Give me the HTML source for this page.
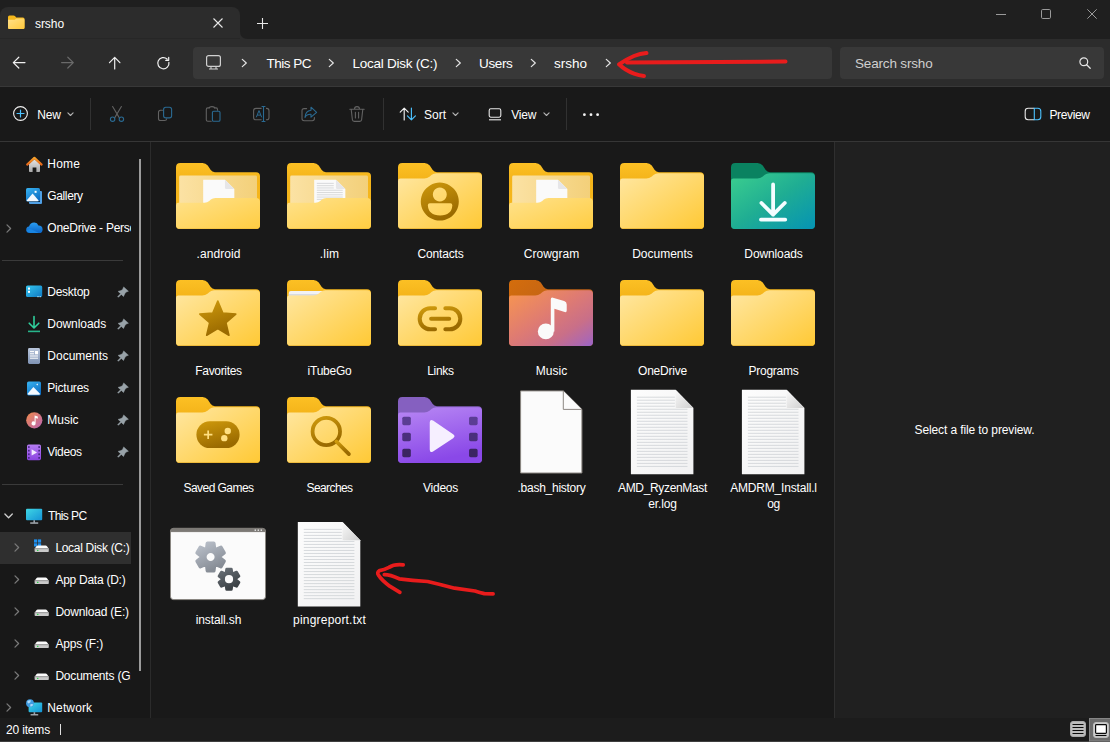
<!DOCTYPE html>
<html><head><meta charset="utf-8"><title>srsho - File Explorer</title>
<style>
html,body{margin:0;padding:0;background:#191919;overflow:hidden}
body{width:1110px;height:742px;position:relative;font-family:"Liberation Sans",sans-serif;color:#fff;font-size:12px}
.abs,#win *{position:absolute;box-sizing:border-box}
#win{position:absolute;left:0;top:0;width:1110px;height:742px;overflow:hidden}
#titlebar{left:0;top:0;width:1110px;height:39px;background:#1f1f1f}
#tab{left:0;top:7px;width:240px;height:32px;background:#2c2c2c;border-radius:8px 8px 0 0}
#addr{left:0;top:39px;width:1110px;height:47px;background:#2c2c2c}
#addrline{left:0;top:86px;width:1110px;height:1px;background:#383838}
#abox{left:193px;top:47px;width:639px;height:32px;background:#383838;border-radius:4px}
#sbox{left:840px;top:47px;width:264px;height:32px;background:#383838;border-radius:4px}
#cmd{left:0;top:87px;width:1110px;height:54px;background:#191919}
#cmdline{left:0;top:141px;width:1110px;height:1px;background:#363636}
#nav{left:0;top:142px;width:150px;height:576px;background:#181818}
#navdiv{left:150px;top:142px;width:1px;height:576px;background:#2b2b2b}
#content{left:151px;top:142px;width:683px;height:576px;background:#191919}
#prevdiv{left:834px;top:142px;width:1px;height:576px;background:#2f2f2f}
#preview{left:835px;top:142px;width:275px;height:576px;background:#202020}
#status{left:0;top:718px;width:1110px;height:24px;background:#1c1c1c}
#botline{left:0;top:741px;width:1110px;height:1px;background:#3f3f3f}
.t{white-space:nowrap;line-height:16px;height:16px}
.t13{font-size:13px;line-height:18px;height:18px}
.lbl{width:111px;text-align:center;line-height:16px;white-space:nowrap}
svg{overflow:visible}
</style></head><body><div id="win">
<div id="titlebar"></div>
<div id="tab"></div><div style="left:0;top:38px;width:240px;height:1px;background:#272727"></div>
<div id="addr"></div><div id="addrline"></div>
<div id="abox"></div><div id="sbox"></div>
<div id="cmd"></div><div id="cmdline"></div>
<div id="nav"></div><div id="navdiv"></div>
<div id="content"></div><div id="prevdiv"></div><div id="preview"></div>
<div id="status"></div><div id="botline"></div>

<div class="t" style="left:35px;top:16px;letter-spacing:-0.07px;">srsho</div>
<div class="t" style="left:266.5px;top:55px;font-size:13.5px;line-height:18px;height:18px;letter-spacing:-0.5px;">This PC</div>
<div class="t" style="left:352.5px;top:55px;font-size:13.5px;line-height:18px;height:18px;letter-spacing:-0.25px;">Local Disk (C:)</div>
<div class="t" style="left:479px;top:55px;font-size:13.5px;line-height:18px;height:18px;letter-spacing:-0.35px;">Users</div>
<div class="t" style="left:554px;top:55px;font-size:13.5px;line-height:18px;height:18px;letter-spacing:-0.0px;">srsho</div>
<div class="t" style="left:855px;top:55px;font-size:13.5px;line-height:18px;height:18px;letter-spacing:-0.17px;color:#cfcfcf">Search srsho</div>
<div class="t" style="left:37.2px;top:107px;letter-spacing:-0.11px;">New</div>
<div class="t" style="left:424px;top:107px;letter-spacing:-0.0px;">Sort</div>
<div class="t" style="left:511.3px;top:107px;letter-spacing:-0.22px;">View</div>
<div class="t" style="left:1049.4px;top:107px;letter-spacing:-0.34px;">Preview</div>
<div class="t" style="left:6px;top:722px;letter-spacing:-0.17px;">20 items</div>
<div class="t" style="left:874.5px;top:422px;width:200px;text-align:center;letter-spacing:-0.11px;">Select a file to preview.</div>

<div id="navclip" style="left:0;top:142px;width:131px;height:576px;overflow:hidden">
<div style="left:0;top:390px;width:131px;height:32px;background:#2f2f2f"></div>
<div class="t" style="left:47.3px;top:14px;letter-spacing:0.17px;">Home</div>
<div class="t" style="left:47.3px;top:46px;letter-spacing:-0.37px;">Gallery</div>
<div class="t" style="left:47.3px;top:78px;letter-spacing:-0.25px;">OneDrive - Personal</div>
<div class="t" style="left:47.3px;top:142px;letter-spacing:-0.26px;">Desktop</div>
<div class="t" style="left:47.3px;top:174px;letter-spacing:-0.06px;">Downloads</div>
<div class="t" style="left:47.3px;top:206px;letter-spacing:0.01px;">Documents</div>
<div class="t" style="left:47.3px;top:238px;letter-spacing:-0.22px;">Pictures</div>
<div class="t" style="left:47.3px;top:270px;letter-spacing:-0.01px;">Music</div>
<div class="t" style="left:47.3px;top:302px;letter-spacing:-0.33px;">Videos</div>
<div class="t" style="left:48px;top:366px;letter-spacing:-0.6px;">This PC</div>
<div class="t" style="left:55.4px;top:398px;letter-spacing:-0.31px;">Local Disk (C:)</div>
<div class="t" style="left:55.4px;top:430px;letter-spacing:-0.26px;">App Data (D:)</div>
<div class="t" style="left:55.4px;top:462px;letter-spacing:-0.2px;">Download (E:)</div>
<div class="t" style="left:55.4px;top:494px;letter-spacing:-0.2px;">Apps (F:)</div>
<div class="t" style="left:55.4px;top:526px;letter-spacing:-0.2px;">Documents (G:)</div>
<div class="t" style="left:47.3px;top:558px;letter-spacing:0.13px;">Network</div>
</div>
<div style="left:2px;top:260px;width:121px;height:1px;background:#3a3a3a"></div>
<div style="left:2px;top:484px;width:121px;height:1px;background:#3a3a3a"></div>
<div style="left:139px;top:159px;width:2px;height:512px;background:#9b9b9b"></div>
<div style="left:60px;top:724px;width:1px;height:11px;background:#e0e0e0"></div>

<div class="t" style="left:118.5px;top:246px;width:200px;text-align:center;letter-spacing:0.05px;">.android</div>
<div class="t" style="left:229.5px;top:246px;width:200px;text-align:center;letter-spacing:0.21px;">.lim</div>
<div class="t" style="left:340.5px;top:246px;width:200px;text-align:center;letter-spacing:-0.14px;">Contacts</div>
<div class="t" style="left:451.5px;top:246px;width:200px;text-align:center;letter-spacing:-0.01px;">Crowgram</div>
<div class="t" style="left:562.5px;top:246px;width:200px;text-align:center;letter-spacing:-0.01px;">Documents</div>
<div class="t" style="left:673.5px;top:246px;width:200px;text-align:center;letter-spacing:-0.12px;">Downloads</div>
<div class="t" style="left:118.5px;top:363px;width:200px;text-align:center;letter-spacing:-0.32px;">Favorites</div>
<div class="t" style="left:229.5px;top:363px;width:200px;text-align:center;letter-spacing:-0.26px;">iTubeGo</div>
<div class="t" style="left:340.5px;top:363px;width:200px;text-align:center;letter-spacing:-0.28px;">Links</div>
<div class="t" style="left:451.5px;top:363px;width:200px;text-align:center;letter-spacing:0.07px;">Music</div>
<div class="t" style="left:562.5px;top:363px;width:200px;text-align:center;letter-spacing:-0.22px;">OneDrive</div>
<div class="t" style="left:673.5px;top:363px;width:200px;text-align:center;letter-spacing:-0.26px;">Programs</div>
<div class="t" style="left:118.5px;top:480px;width:200px;text-align:center;letter-spacing:-0.54px;">Saved Games</div>
<div class="t" style="left:229.5px;top:480px;width:200px;text-align:center;letter-spacing:-0.6px;">Searches</div>
<div class="t" style="left:340.5px;top:480px;width:200px;text-align:center;letter-spacing:-0.25px;">Videos</div>
<div class="t" style="left:451.5px;top:480px;width:200px;text-align:center;letter-spacing:-0.26px;">.bash_history</div>
<div class="t" style="left:562.5px;top:480px;width:200px;text-align:center;letter-spacing:-0.34px;">AMD_RyzenMast</div>
<div class="t" style="left:673.5px;top:480px;width:200px;text-align:center;letter-spacing:-0.18px;">AMDRM_Install.l</div>
<div class="t" style="left:562.5px;top:496px;width:200px;text-align:center;letter-spacing:-0.11px;">er.log</div>
<div class="t" style="left:673.5px;top:496px;width:200px;text-align:center;letter-spacing:-0.38px;">og</div>
<div class="t" style="left:118.5px;top:612px;width:200px;text-align:center;letter-spacing:-0.11px;">install.sh</div>
<div class="t" style="left:229.5px;top:612px;width:200px;text-align:center;letter-spacing:0.2px;">pingreport.txt</div>

<!-- tab concave corner -->
<svg style="left:240px;top:31px" width="8" height="8" viewBox="0 0 8 8"><path d="M0 0 Q0 8 8 8 H0Z" fill="#2c2c2c"/></svg>
<!-- tab folder icon -->
<svg style="left:8px;top:15px" width="17" height="15" viewBox="0 0 17 15"><defs><linearGradient id="tfg" x1="0" y1="0" x2="1" y2="1"><stop offset="0" stop-color="#ffe08a"/><stop offset="1" stop-color="#ffc93c"/></linearGradient></defs>
<path d="M0 2 Q0 0.5 1.5 0.5 H5.5 Q6.5 0.5 7.2 1.3 L8.2 2.5 H15 Q16.5 2.5 16.5 4 V12.5 Q16.5 14 15 14 H1.5 Q0 14 0 12.5Z" fill="#f5b81c"/>
<path d="M0 4.8 H6 Q6.8 4.8 7.4 4.2 L8 3.6 H15 Q16.5 3.6 16.5 5 V12.5 Q16.5 14 15 14 H1.5 Q0 14 0 12.5Z" fill="url(#tfg)"/></svg>
<!-- tab close, plus -->
<svg style="left:213px;top:18px" width="10" height="10" viewBox="0 0 10 10"><path d="M0.5 0.5 L9.5 9.5 M9.5 0.5 L0.5 9.5" stroke="#e8e8e8" stroke-width="1.1" fill="none"/></svg>
<svg style="left:257px;top:18px" width="11" height="11" viewBox="0 0 11 11"><path d="M5.5 0 V11 M0 5.5 H11" stroke="#e8e8e8" stroke-width="1.1" fill="none"/></svg>
<!-- window controls -->
<svg style="left:996px;top:14px" width="10" height="1" viewBox="0 0 10 1"><path d="M0 0.5 H10" stroke="#9a9a9a" stroke-width="1"/></svg>
<svg style="left:1041px;top:9px" width="10" height="10" viewBox="0 0 10 10"><rect x="0.5" y="0.5" width="9" height="9" rx="1.2" stroke="#9a9a9a" stroke-width="1" fill="none"/></svg>
<svg style="left:1087px;top:9px" width="10" height="10" viewBox="0 0 10 10"><path d="M0.3 0.3 L9.7 9.7 M9.7 0.3 L0.3 9.7" stroke="#9a9a9a" stroke-width="1" fill="none"/></svg>
<!-- nav arrows -->
<svg style="left:12px;top:56px" width="14" height="13" viewBox="0 0 14 13"><path d="M13 6.6 H1.4 M6.8 1.2 L1.3 6.6 L6.8 12" stroke="#f0f0f0" stroke-width="1.2" fill="none" stroke-linecap="round" stroke-linejoin="round"/></svg>
<svg style="left:60px;top:56px" width="14" height="13" viewBox="0 0 14 13"><path d="M1.6 6.6 H13.2 M7.8 1.2 L13.3 6.6 L7.8 12" stroke="#6a6a6a" stroke-width="1.2" fill="none" stroke-linecap="round" stroke-linejoin="round"/></svg>
<svg style="left:108px;top:56px" width="14" height="14" viewBox="0 0 14 14"><path d="M6.7 12.9 V1.4 M1.5 6.7 L6.7 1.3 L11.9 6.7" stroke="#f0f0f0" stroke-width="1.2" fill="none" stroke-linecap="round" stroke-linejoin="round"/></svg>
<svg style="left:156px;top:56px" width="14" height="14" viewBox="0 0 14 14"><path d="M12.7 6.2 A5.6 5.6 0 1 1 10.9 2.9 M12.5 1.2 V4.2 H9.5" stroke="#f0f0f0" stroke-width="1.2" fill="none" stroke-linecap="round" stroke-linejoin="round" transform="translate(0.2,0.1)"/></svg>
<!-- monitor -->
<svg style="left:206px;top:55px" width="15" height="15" viewBox="0 0 15 15"><rect x="0.6" y="0.6" width="13.8" height="10.8" rx="2" stroke="#d0d0d0" stroke-width="1.2" fill="none"/><path d="M5 11.5 V13.6 M10 11.5 V13.6 M3 14 H12" stroke="#d0d0d0" stroke-width="1.1" fill="none"/></svg>
<!-- chevrons -->
<svg style="left:241px;top:58px" width="6" height="10" viewBox="0 0 6 10"><path d="M1.3 1.4 L5.3 5 L1.3 8.6" stroke="#e6e6e6" stroke-width="1.2" fill="none" stroke-linecap="round" stroke-linejoin="round"/></svg>
<svg style="left:328px;top:58px" width="6" height="10" viewBox="0 0 6 10"><path d="M1.3 1.4 L5.3 5 L1.3 8.6" stroke="#e6e6e6" stroke-width="1.2" fill="none" stroke-linecap="round" stroke-linejoin="round"/></svg>
<svg style="left:455px;top:58px" width="6" height="10" viewBox="0 0 6 10"><path d="M1.3 1.4 L5.3 5 L1.3 8.6" stroke="#e6e6e6" stroke-width="1.2" fill="none" stroke-linecap="round" stroke-linejoin="round"/></svg>
<svg style="left:530px;top:58px" width="6" height="10" viewBox="0 0 6 10"><path d="M1.3 1.4 L5.3 5 L1.3 8.6" stroke="#e6e6e6" stroke-width="1.2" fill="none" stroke-linecap="round" stroke-linejoin="round"/></svg>
<svg style="left:605px;top:58px" width="6" height="10" viewBox="0 0 6 10"><path d="M1.3 1.4 L5.3 5 L1.3 8.6" stroke="#e6e6e6" stroke-width="1.2" fill="none" stroke-linecap="round" stroke-linejoin="round"/></svg>
<!-- search icon -->
<svg style="left:1079px;top:57px" width="12" height="12" viewBox="0 0 12 12"><circle cx="4.8" cy="4.8" r="3.9" stroke="#e6e6e6" stroke-width="1.2" fill="none"/><path d="M7.7 7.7 L11.2 11.2" stroke="#e6e6e6" stroke-width="1.3" stroke-linecap="round"/></svg>
<!-- COMMAND BAR -->
<svg style="left:13px;top:106px" width="15" height="15" viewBox="0 0 15 15"><circle cx="7.5" cy="7.5" r="6.9" stroke="#f0f0f0" stroke-width="1.1" fill="none"/><path d="M7.5 4 V11 M4 7.5 H11" stroke="#4cc2ff" stroke-width="1.2" stroke-linecap="round"/></svg>
<svg style="left:67px;top:112px" width="7" height="5" viewBox="0 0 7 5"><path d="M0.9 0.9 L3.5 3.5 L6.1 0.9" stroke="#b4b4b4" stroke-width="1.1" fill="none" stroke-linecap="round" stroke-linejoin="round"/></svg>
<div style="left:90px;top:98px;width:1px;height:32px;background:#313131"></div>
<!-- cut -->
<svg style="left:109px;top:106px" width="16" height="16" viewBox="0 0 16 16"><path d="M3.6 0.5 L10.2 11.6 M12.4 0.5 L5.8 11.6" stroke="#626262" stroke-width="1.1" fill="none" stroke-linecap="round"/><circle cx="3.6" cy="13.2" r="2.2" stroke="#2a6a92" stroke-width="1.1" fill="none"/><circle cx="12.4" cy="13.2" r="2.2" stroke="#2a6a92" stroke-width="1.1" fill="none"/></svg>
<!-- copy -->
<svg style="left:157px;top:106px" width="16" height="16" viewBox="0 0 16 16"><path d="M5.5 4.2 H3.6 Q1.5 4.2 1.5 6.3 V12.4 Q1.5 14.5 3.6 14.5 H7.6 Q9.6 14.5 9.7 12.8" stroke="#626262" stroke-width="1.1" fill="none" stroke-linecap="round"/><rect x="6.6" y="1.3" width="8" height="10.6" rx="2.2" stroke="#2a6a92" stroke-width="1.1" fill="none"/></svg>
<!-- paste -->
<svg style="left:205px;top:106px" width="16" height="16" viewBox="0 0 16 16"><path d="M6.2 15.2 H2.8 Q1.3 15.2 1.3 13.7 V3.4 Q1.3 1.9 2.8 1.9 H4.2 M9.6 1.9 H11 Q12.5 1.9 12.5 3.4 V4.3" stroke="#626262" stroke-width="1.1" fill="none" stroke-linecap="round"/><path d="M4.2 2.2 Q4.2 0.6 6.9 0.6 Q9.6 0.6 9.6 2.2" stroke="#626262" stroke-width="1.1" fill="none"/><rect x="7.4" y="5.2" width="7.6" height="10" rx="1.3" stroke="#2a6a92" stroke-width="1.1" fill="none"/></svg>
<!-- rename -->
<svg style="left:253px;top:105px" width="17" height="18" viewBox="0 0 17 18"><path d="M8.6 3.4 H3 Q0.6 3.4 0.6 5.8 V12.4 Q0.6 14.8 3 14.8 H8.6 M13 3.4 H13.6 Q16 3.4 16 5.8 V12.4 Q16 14.8 13.6 14.8 H13" stroke="#626262" stroke-width="1.1" fill="none"/><path d="M10.5 1.5 V16.5 M8.6 1.5 H12.4 M8.6 16.5 H12.4" stroke="#2a6a92" stroke-width="1.1" fill="none"/><path d="M3.3 12.3 L6 5.6 L8.7 12.3 M4.2 10.1 H7.8" stroke="#2a6a92" stroke-width="1" fill="none" stroke-linejoin="round"/></svg>
<!-- share -->
<svg style="left:301px;top:106px" width="17" height="16" viewBox="0 0 17 16"><path d="M5.6 2.6 H3.2 Q1 2.6 1 4.8 V12.6 Q1 14.8 3.2 14.8 H11.2 Q13.4 14.8 13.4 12.6 V11.6" stroke="#626262" stroke-width="1.1" fill="none" stroke-linecap="round"/><path d="M10 1.2 L15.6 6.3 L10 11.2 V8.3 Q5.8 8 4 11.4 Q4.3 5 10 4.2 Z" stroke="#2a6a92" stroke-width="1.1" fill="none" stroke-linejoin="round"/></svg>
<!-- delete -->
<svg style="left:349px;top:106px" width="16" height="16" viewBox="0 0 16 16"><path d="M0.8 3.2 H15.2 M5.5 3 Q5.5 0.6 8 0.6 Q10.5 0.6 10.5 3 M2.2 3.4 L3.4 13.8 Q3.6 15.4 5.2 15.4 H10.8 Q12.4 15.4 12.6 13.8 L13.8 3.4 M6.4 6.3 V12 M9.6 6.3 V12" stroke="#626262" stroke-width="1.1" fill="none" stroke-linecap="round"/></svg>
<div style="left:383px;top:98px;width:1px;height:32px;background:#313131"></div>
<!-- sort -->
<svg style="left:399px;top:107px" width="18" height="14" viewBox="0 0 18 14"><path d="M5.2 13 V1.2 M1.2 5.2 L5.2 1.1 L9.2 5.2" stroke="#f0f0f0" stroke-width="1.15" fill="none" stroke-linecap="round" stroke-linejoin="round"/><path d="M12.4 1 V12.8 M8.4 8.8 L12.4 12.9 L16.4 8.8" stroke="#4cc2ff" stroke-width="1.15" fill="none" stroke-linecap="round" stroke-linejoin="round"/></svg>
<svg style="left:452px;top:112px" width="7" height="5" viewBox="0 0 7 5"><path d="M0.9 0.9 L3.5 3.5 L6.1 0.9" stroke="#b4b4b4" stroke-width="1.1" fill="none" stroke-linecap="round" stroke-linejoin="round"/></svg>
<!-- view -->
<svg style="left:488px;top:108px" width="14" height="13" viewBox="0 0 14 13"><rect x="1.2" y="0.8" width="11.6" height="8.4" rx="1.6" stroke="#e8e8e8" stroke-width="1.1" fill="none"/><path d="M1 11.8 H13" stroke="#e8e8e8" stroke-width="1.1"/></svg>
<svg style="left:543px;top:112px" width="7" height="5" viewBox="0 0 7 5"><path d="M0.9 0.9 L3.5 3.5 L6.1 0.9" stroke="#b4b4b4" stroke-width="1.1" fill="none" stroke-linecap="round" stroke-linejoin="round"/></svg>
<div style="left:566px;top:98px;width:1px;height:32px;background:#313131"></div>
<svg style="left:582px;top:112px" width="18" height="5" viewBox="0 0 18 5"><circle cx="2.4" cy="2.7" r="1.4" fill="#f4f4f4"/><circle cx="9" cy="2.7" r="1.4" fill="#f4f4f4"/><circle cx="15.6" cy="2.7" r="1.4" fill="#f4f4f4"/></svg>
<!-- preview -->
<svg style="left:1024px;top:107px" width="18" height="14" viewBox="0 0 18 14"><path d="M10.3 1.2 H4.2 Q1.2 1.2 1.2 4.2 V9.8 Q1.2 12.8 4.2 12.8 H10.3" stroke="#e8e8e8" stroke-width="1.1" fill="none"/><path d="M10.3 1.2 H13.8 Q16.8 1.2 16.8 4.2 V9.8 Q16.8 12.8 13.8 12.8 H10.3 Z" stroke="#4cc2ff" stroke-width="1.1" fill="none"/></svg>
<!-- status bar view buttons -->
<svg style="left:1068px;top:718px" width="42" height="24" viewBox="0 0 42 24"><rect x="21.5" y="0.5" width="21" height="22.5" fill="#6c6c6c" stroke="#868686" stroke-width="1"/><rect x="2.5" y="3.5" width="15" height="15" rx="2.5" fill="#bcbcbc" stroke="#a9a9a9" stroke-width="1"/><path d="M4.5 6.5 H15.5 M4.5 9.5 H15.5 M4.5 12.5 H15.5 M4.5 15.5 H15.5" stroke="#0a0a0a" stroke-width="1.2"/><rect x="25.5" y="4.5" width="15" height="15" rx="2.5" fill="#cdcdcd" stroke="#bdbdbd" stroke-width="1"/><rect x="27.6" y="6.6" width="10.8" height="8.8" rx="0.8" fill="#fff" stroke="#0a0a0a" stroke-width="1.2"/><path d="M27.5 17.5 H38.5" stroke="#0a0a0a" stroke-width="1.1"/></svg>
<svg width="0" height="0" style="left:0;top:0"><defs><linearGradient id="gHomeR" x1="0" y1="0" x2="0" y2="1"><stop offset="0" stop-color="#f7a02a"/><stop offset="1" stop-color="#e8681a"/></linearGradient><linearGradient id="gHomeB" x1="0" y1="0" x2="0" y2="1"><stop offset="0" stop-color="#e6e6e6"/><stop offset="1" stop-color="#a8a8a8"/></linearGradient><linearGradient id="gBlue" x1="0" y1="0" x2="0.6" y2="1"><stop offset="0" stop-color="#38b4f2"/><stop offset="1" stop-color="#0f6fc4"/></linearGradient><linearGradient id="gDesk" x1="0" y1="0" x2="1" y2="1"><stop offset="0" stop-color="#35c6ef"/><stop offset="1" stop-color="#0e78c2"/></linearGradient><linearGradient id="gPC" x1="0" y1="0" x2="1" y2="1"><stop offset="0" stop-color="#3fd6e4"/><stop offset="1" stop-color="#1593d6"/></linearGradient><linearGradient id="gDoc" x1="0" y1="0" x2="0" y2="1"><stop offset="0" stop-color="#b9c6dc"/><stop offset="1" stop-color="#7f93b4"/></linearGradient><linearGradient id="gMus" x1="0" y1="0" x2="1" y2="1"><stop offset="0" stop-color="#f08a4a"/><stop offset="1" stop-color="#b964b4"/></linearGradient><linearGradient id="gVid" x1="0" y1="0" x2="0" y2="1"><stop offset="0" stop-color="#b57cf2"/><stop offset="1" stop-color="#8a43e0"/></linearGradient><linearGradient id="gDrv" x1="0" y1="0" x2="0" y2="1"><stop offset="0" stop-color="#f2f2f2"/><stop offset="1" stop-color="#b8b8b8"/></linearGradient><linearGradient id="gCloud" x1="0" y1="0" x2="0" y2="1"><stop offset="0" stop-color="#2a9cf0"/><stop offset="1" stop-color="#0a64c8"/></linearGradient></defs></svg>
<svg style="left:26px;top:156px" width="17" height="17" viewBox="0 0 17 17"><path d="M3 8 V15.2 Q3 16 3.8 16 H6.6 V11.4 H10.4 V16 H13.2 Q14 16 14 15.2 V8 L8.5 3.2 Z" fill="url(#gHomeB)"/><path d="M1.2 8.6 L8.4 1.9 L15.6 8.6" stroke="url(#gHomeR)" stroke-width="2.2" fill="none" stroke-linecap="round" stroke-linejoin="round"/></svg>
<svg style="left:26px;top:188px" width="17" height="17" viewBox="0 0 17 17"><path d="M3 14 H16 V15 Q16 16 15 16 H4 Q3 16 3 15Z M14 3 H15 Q16 3 16 4 V15 H14Z" fill="#4f9fe4"/><rect x="0" y="0" width="14" height="13.6" rx="1.6" fill="url(#gBlue)"/><path d="M0.6 12.4 L6.6 5.4 L12.6 12.4 Q12.4 13.2 11.6 13.2 H1.6 Q0.8 13.2 0.6 12.4Z" fill="#f4f9ff"/><rect x="8.6" y="2.8" width="2" height="2" fill="#fff"/></svg>
<svg style="left:26px;top:222px" width="17" height="12" viewBox="0 0 17 12"><path d="M4 11 Q0.2 11 0.2 7.8 Q0.2 5 3 4.6 Q4.4 0.4 8.4 0.6 Q11.4 0.8 12.4 3.6 Q16.6 3.6 16.6 7.4 Q16.6 11 13 11 Z" fill="url(#gCloud)"/><path d="M0.4 8.6 Q2.5 6.4 5.8 7.4 L13 11 H4 Q1 11 0.4 8.6Z" fill="#1a8ae6" opacity=".85"/></svg>
<svg style="left:6px;top:224px" width="6" height="9" viewBox="0 0 6 9"><path d="M1 0.9 L4.6 4.5 L1 8.1" stroke="#7a7a7a" stroke-width="1.25" fill="none" stroke-linecap="round" stroke-linejoin="round"/></svg>
<svg style="left:26px;top:285px" width="17" height="13" viewBox="0 0 17 13"><rect x="0" y="0.5" width="16.2" height="11.6" rx="1.6" fill="url(#gDesk)"/><rect x="2" y="2.6" width="2" height="2" fill="#fff"/><rect x="2" y="5.8" width="2" height="2" fill="#fff"/><rect x="11.4" y="11.2" width="1.2" height="1" fill="#dff"/><rect x="13.6" y="11.2" width="1.2" height="1" fill="#dff"/></svg>
<svg style="left:28px;top:316px" width="12" height="17" viewBox="0 0 12 17"><path d="M6 0.6 V11.6 M1.2 7.2 L6 12 L10.8 7.2" stroke="#2fcf9c" stroke-width="1.6" fill="none" stroke-linecap="round" stroke-linejoin="round"/><path d="M0 15.4 H12" stroke="#27b48a" stroke-width="1.6"/></svg>
<svg style="left:28px;top:348px" width="12" height="16" viewBox="0 0 12 16"><rect x="0" y="0" width="12" height="16" rx="1.4" fill="url(#gDoc)"/><path d="M2 3.6 H6 M2 5.8 H6 M2 8 H10 M2 10.2 H10" stroke="#fff" stroke-width="1"/><rect x="7" y="3" width="3" height="3.3" fill="#fff"/></svg>
<svg style="left:27px;top:381px" width="14" height="15" viewBox="0 0 14 15"><rect x="0" y="0.6" width="14" height="13.8" rx="1.6" fill="url(#gBlue)"/><path d="M0.6 12.8 L6.4 6 L13 12.8 Q13 13.8 12 13.8 H1.6 Q0.6 13.8 0.6 12.8Z" fill="#f4f9ff"/><path d="M10.2 2.6 L11 3.6 L10.2 4.6 L9.4 3.6Z" fill="#fff"/></svg>
<svg style="left:26px;top:412px" width="17" height="17" viewBox="0 0 17 17"><circle cx="8.3" cy="8.3" r="8.1" fill="url(#gMus)"/><path d="M8.6 3.6 L11.8 4.6 V6.8 L9.6 6.1 V11.4 A2 2 0 1 1 8.6 9.7 Z" fill="#fff"/></svg>
<svg style="left:27px;top:444px" width="14" height="17" viewBox="0 0 14 17"><rect x="0" y="0.6" width="14" height="15.6" rx="1.6" fill="url(#gVid)"/><path d="M4.6 5.2 L10 8.4 L4.6 11.6Z" fill="#f3ebff"/><g fill="#4a2a86"><rect x="1" y="2.2" width="1.7" height="1.7"/><rect x="1" y="5.8" width="1.7" height="1.7"/><rect x="1" y="9.4" width="1.7" height="1.7"/><rect x="1" y="13" width="1.7" height="1.7"/><rect x="11.3" y="2.2" width="1.7" height="1.7"/><rect x="11.3" y="5.8" width="1.7" height="1.7"/><rect x="11.3" y="9.4" width="1.7" height="1.7"/><rect x="11.3" y="13" width="1.7" height="1.7"/></g></svg>
<svg style="left:117px;top:286px" width="12" height="12" viewBox="0 0 12 12"><path d="M6.7,0.9 L11.4,5.2 L9.1,6.1 L7.8,7.7 L6.5,10.5 L4.3,8.4 L1.4,11.3 L0.7,10.6 L3.6,7.7 L1.1,5.4 L4,4.6 L5.6,3.4 Z" fill="#98a2a8" stroke="#98a2a8" stroke-width="0.5" stroke-linejoin="round"/></svg>
<svg style="left:117px;top:318px" width="12" height="12" viewBox="0 0 12 12"><path d="M6.7,0.9 L11.4,5.2 L9.1,6.1 L7.8,7.7 L6.5,10.5 L4.3,8.4 L1.4,11.3 L0.7,10.6 L3.6,7.7 L1.1,5.4 L4,4.6 L5.6,3.4 Z" fill="#98a2a8" stroke="#98a2a8" stroke-width="0.5" stroke-linejoin="round"/></svg>
<svg style="left:117px;top:350px" width="12" height="12" viewBox="0 0 12 12"><path d="M6.7,0.9 L11.4,5.2 L9.1,6.1 L7.8,7.7 L6.5,10.5 L4.3,8.4 L1.4,11.3 L0.7,10.6 L3.6,7.7 L1.1,5.4 L4,4.6 L5.6,3.4 Z" fill="#98a2a8" stroke="#98a2a8" stroke-width="0.5" stroke-linejoin="round"/></svg>
<svg style="left:117px;top:382px" width="12" height="12" viewBox="0 0 12 12"><path d="M6.7,0.9 L11.4,5.2 L9.1,6.1 L7.8,7.7 L6.5,10.5 L4.3,8.4 L1.4,11.3 L0.7,10.6 L3.6,7.7 L1.1,5.4 L4,4.6 L5.6,3.4 Z" fill="#98a2a8" stroke="#98a2a8" stroke-width="0.5" stroke-linejoin="round"/></svg>
<svg style="left:117px;top:414px" width="12" height="12" viewBox="0 0 12 12"><path d="M6.7,0.9 L11.4,5.2 L9.1,6.1 L7.8,7.7 L6.5,10.5 L4.3,8.4 L1.4,11.3 L0.7,10.6 L3.6,7.7 L1.1,5.4 L4,4.6 L5.6,3.4 Z" fill="#98a2a8" stroke="#98a2a8" stroke-width="0.5" stroke-linejoin="round"/></svg>
<svg style="left:117px;top:446px" width="12" height="12" viewBox="0 0 12 12"><path d="M6.7,0.9 L11.4,5.2 L9.1,6.1 L7.8,7.7 L6.5,10.5 L4.3,8.4 L1.4,11.3 L0.7,10.6 L3.6,7.7 L1.1,5.4 L4,4.6 L5.6,3.4 Z" fill="#98a2a8" stroke="#98a2a8" stroke-width="0.5" stroke-linejoin="round"/></svg>
<svg style="left:4px;top:513px" width="10" height="6" viewBox="0 0 10 6"><path d="M0.9 1 L4.6 4.7 L8.3 1" stroke="#d0d0d0" stroke-width="1.3" fill="none" stroke-linecap="round" stroke-linejoin="round"/></svg>
<svg style="left:26px;top:508px" width="17" height="17" viewBox="0 0 17 17"><rect x="0" y="0.8" width="16.2" height="11.4" rx="1" fill="url(#gPC)"/><rect x="7.4" y="12.2" width="1.6" height="2.4" fill="#9aa4ae"/><rect x="4.2" y="14.4" width="8" height="1.3" fill="#b8c0c8"/></svg>
<svg style="left:34px;top:539px" width="16" height="16" viewBox="0 0 16 16"><g fill="#1e90f0"><rect x="0" y="0.4" width="3.2" height="3.2"/><rect x="3.9" y="0.4" width="3.2" height="3.2"/><rect x="0" y="4.3" width="3.2" height="3.2"/><rect x="3.9" y="4.3" width="3.2" height="3.2"/></g><path d="M0.8 9.4 L2.4 7.2 Q2.9 6.5 3.8 6.5 H11.6 Q12.5 6.5 13 7.2 L14.6 9.4 Z" fill="#fafafa"/><rect x="0.6" y="9.2" width="14.2" height="3.8" rx="0.8" fill="#c9c9c9"/><rect x="0.6" y="9.2" width="14.2" height="1" fill="#9c9c9c"/><rect x="3" y="10.8" width="1.4" height="1.2" fill="#2bd14a"/></svg>
<svg style="left:34px;top:571px" width="16" height="16" viewBox="0 0 16 16"><path d="M0.8 9.4 L2.4 7.2 Q2.9 6.5 3.8 6.5 H11.6 Q12.5 6.5 13 7.2 L14.6 9.4 Z" fill="#fafafa"/><rect x="0.6" y="9.2" width="14.2" height="3.8" rx="0.8" fill="#c9c9c9"/><rect x="0.6" y="9.2" width="14.2" height="1" fill="#9c9c9c"/><rect x="3" y="10.8" width="1.4" height="1.2" fill="#2bd14a"/></svg>
<svg style="left:34px;top:603px" width="16" height="16" viewBox="0 0 16 16"><path d="M0.8 9.4 L2.4 7.2 Q2.9 6.5 3.8 6.5 H11.6 Q12.5 6.5 13 7.2 L14.6 9.4 Z" fill="#fafafa"/><rect x="0.6" y="9.2" width="14.2" height="3.8" rx="0.8" fill="#c9c9c9"/><rect x="0.6" y="9.2" width="14.2" height="1" fill="#9c9c9c"/><rect x="3" y="10.8" width="1.4" height="1.2" fill="#2bd14a"/></svg>
<svg style="left:34px;top:635px" width="16" height="16" viewBox="0 0 16 16"><path d="M0.8 9.4 L2.4 7.2 Q2.9 6.5 3.8 6.5 H11.6 Q12.5 6.5 13 7.2 L14.6 9.4 Z" fill="#fafafa"/><rect x="0.6" y="9.2" width="14.2" height="3.8" rx="0.8" fill="#c9c9c9"/><rect x="0.6" y="9.2" width="14.2" height="1" fill="#9c9c9c"/><rect x="3" y="10.8" width="1.4" height="1.2" fill="#2bd14a"/></svg>
<svg style="left:34px;top:667px" width="16" height="16" viewBox="0 0 16 16"><path d="M0.8 9.4 L2.4 7.2 Q2.9 6.5 3.8 6.5 H11.6 Q12.5 6.5 13 7.2 L14.6 9.4 Z" fill="#fafafa"/><rect x="0.6" y="9.2" width="14.2" height="3.8" rx="0.8" fill="#c9c9c9"/><rect x="0.6" y="9.2" width="14.2" height="1" fill="#9c9c9c"/><rect x="3" y="10.8" width="1.4" height="1.2" fill="#2bd14a"/></svg>
<svg style="left:14px;top:543px" width="6" height="9" viewBox="0 0 6 9"><path d="M1 0.9 L4.6 4.5 L1 8.1" stroke="#7a7a7a" stroke-width="1.25" fill="none" stroke-linecap="round" stroke-linejoin="round"/></svg>
<svg style="left:14px;top:575px" width="6" height="9" viewBox="0 0 6 9"><path d="M1 0.9 L4.6 4.5 L1 8.1" stroke="#7a7a7a" stroke-width="1.25" fill="none" stroke-linecap="round" stroke-linejoin="round"/></svg>
<svg style="left:14px;top:607px" width="6" height="9" viewBox="0 0 6 9"><path d="M1 0.9 L4.6 4.5 L1 8.1" stroke="#7a7a7a" stroke-width="1.25" fill="none" stroke-linecap="round" stroke-linejoin="round"/></svg>
<svg style="left:14px;top:639px" width="6" height="9" viewBox="0 0 6 9"><path d="M1 0.9 L4.6 4.5 L1 8.1" stroke="#7a7a7a" stroke-width="1.25" fill="none" stroke-linecap="round" stroke-linejoin="round"/></svg>
<svg style="left:14px;top:671px" width="6" height="9" viewBox="0 0 6 9"><path d="M1 0.9 L4.6 4.5 L1 8.1" stroke="#7a7a7a" stroke-width="1.25" fill="none" stroke-linecap="round" stroke-linejoin="round"/></svg>
<svg style="left:6px;top:703px" width="6" height="9" viewBox="0 0 6 9"><path d="M1 0.9 L4.6 4.5 L1 8.1" stroke="#7a7a7a" stroke-width="1.25" fill="none" stroke-linecap="round" stroke-linejoin="round"/></svg>
<svg style="left:26px;top:699px" width="17" height="18" viewBox="0 0 17 18"><rect x="2.6" y="3.6" width="13.6" height="9.6" rx="1" fill="url(#gPC)"/><rect x="7.6" y="13.2" width="1.6" height="2.2" fill="#9aa4ae"/><rect x="4.6" y="15.2" width="7.6" height="1.2" fill="#b8c0c8"/><circle cx="4" cy="4.2" r="3.9" fill="#3f9be0"/><path d="M1.2 2.6 Q3 0.8 5 1.4 Q4.6 3.6 2.6 4.6 Q1.4 4 1.2 2.6Z M4.4 5.2 Q6.4 4.6 7.4 5.6 Q6.6 7.6 4.6 7.8 Q4 6.4 4.4 5.2Z" fill="#bfe4ff" opacity=".85"/></svg>
<svg width="0" height="0" style="left:0;top:0"><defs><linearGradient id="fFront" x1="0" y1="0" x2="1" y2="1"><stop offset="0" stop-color="#ffe7a2"/><stop offset="1" stop-color="#ffc935"/></linearGradient><linearGradient id="fBack" x1="0" y1="0" x2="0" y2="1"><stop offset="0" stop-color="#fcc024"/><stop offset="0.25" stop-color="#f4b41a"/><stop offset="1" stop-color="#f7b91e"/></linearGradient><linearGradient id="fOpen" x1="0" y1="0" x2="1" y2="1"><stop offset="0" stop-color="#ffe28c"/><stop offset="1" stop-color="#ffcd42"/></linearGradient><linearGradient id="fPaper" x1="0" y1="0" x2="1" y2="0"><stop offset="0" stop-color="#fbe2a4"/><stop offset="1" stop-color="#f3d07a"/></linearGradient><linearGradient id="fGold" x1="0" y1="0" x2="0.4" y2="1"><stop offset="0" stop-color="#cf9a0c"/><stop offset="1" stop-color="#9a6a00"/></linearGradient><linearGradient id="fBot" x1="0" y1="0" x2="0" y2="1"><stop offset="0.975" stop-color="#d89a10" stop-opacity="0"/><stop offset="1" stop-color="#d89a10" stop-opacity=".7"/></linearGradient><linearGradient id="dlFront" x1="0" y1="0" x2="1" y2="1"><stop offset="0" stop-color="#3ccf8e"/><stop offset="0.5" stop-color="#1fad93"/><stop offset="1" stop-color="#0593b4"/></linearGradient><linearGradient id="muFront" x1="0" y1="0" x2="1" y2="1"><stop offset="0" stop-color="#f8964f"/><stop offset="0.45" stop-color="#df7b72"/><stop offset="0.72" stop-color="#c96f88"/><stop offset="0.9" stop-color="#ae68ae"/><stop offset="1" stop-color="#9864cc"/></linearGradient><linearGradient id="muBack" x1="0" y1="0" x2="1" y2="1"><stop offset="0" stop-color="#d46d0c"/><stop offset="1" stop-color="#a85624"/></linearGradient><linearGradient id="viFront" x1="0" y1="0" x2="0.3" y2="1"><stop offset="0" stop-color="#b888f4"/><stop offset="1" stop-color="#8a48e8"/></linearGradient><linearGradient id="viSq" x1="0" y1="0" x2="0" y2="1"><stop offset="0" stop-color="#60409c"/><stop offset="1" stop-color="#36225c"/></linearGradient><linearGradient id="docG" x1="0" y1="0" x2="1" y2="1"><stop offset="0" stop-color="#fdfdfd"/><stop offset="1" stop-color="#f1f1f2"/></linearGradient><linearGradient id="foldG" x1="0" y1="0" x2="1" y2="1"><stop offset="0" stop-color="#fafafa"/><stop offset="0.5" stop-color="#e4e4e4"/><stop offset="1" stop-color="#cfcfcf"/></linearGradient><linearGradient id="gearA" x1="0" y1="0" x2="0.5" y2="1"><stop offset="0" stop-color="#bcc2cc"/><stop offset="1" stop-color="#878d96"/></linearGradient><linearGradient id="gearB" x1="0" y1="0" x2="0.5" y2="1"><stop offset="0" stop-color="#6a7178"/><stop offset="1" stop-color="#3c4246"/></linearGradient><clipPath id="fclip"><path d="M0,18 Q0,15.6 2.4,15.6 H26.4 Q29.4,15.6 31.6,13.8 L34,11.8 Q35.9,10.2 38.6,10.2 H80.4 Q84.4,10.2 84.4,14.2 V62.4 Q84.4,66.4 80.4,66.4 H4 Q0,66.4 0,62.5 Z"/></clipPath></defs></svg>
<svg style="left:176px;top:163px" width="84" height="66" viewBox="0 0 84.4 66.4" preserveAspectRatio="none"><path d="M0,4.3 Q0,0 4.3,0 H26.6 Q29.9,0 31.9,2.6 L34.7,6.9 Q36.4,9.2 39,9.2 H80.4 Q84.4,9.2 84.4,13.2 V62.4 Q84.4,66.4 80.4,66.4 H4 Q0,66.4 0,62.5 Z" fill="url(#fBack)"/><rect x="3.2" y="12.5" width="78.2" height="40" rx="1.5" fill="url(#fPaper)"/><path d="M27.3,16.8 H49.2 L58.6,26.2 V45 H27.3Z" fill="#fafafa"/><path d="M49.2,16.8 L58.6,26.2 H50.4 Q49.2,26.2 49.2,25Z" fill="#e6e6e8"/><path d="M0,42.4 Q0,40 2.4,40 H28.6 Q31.4,40 33.4,38.2 L35,36.8 Q36.9,35.1 39.6,35.1 H80.4 Q84.4,35.1 84.4,39.1 V62.4 Q84.4,66.4 80.4,66.4 H4 Q0,66.4 0,62.5 Z" fill="url(#fOpen)"/><path d="M0,42.4 Q0,40 2.4,40 H28.6 Q31.4,40 33.4,38.2 L35,36.8 Q36.9,35.1 39.6,35.1 H80.4 Q84.4,35.1 84.4,39.1 V62.4 Q84.4,66.4 80.4,66.4 H4 Q0,66.4 0,62.5 Z" fill="url(#fBot)"/></svg>
<svg style="left:287px;top:163px" width="84" height="66" viewBox="0 0 84.4 66.4" preserveAspectRatio="none"><path d="M0,4.3 Q0,0 4.3,0 H26.6 Q29.9,0 31.9,2.6 L34.7,6.9 Q36.4,9.2 39,9.2 H80.4 Q84.4,9.2 84.4,13.2 V62.4 Q84.4,66.4 80.4,66.4 H4 Q0,66.4 0,62.5 Z" fill="url(#fBack)"/><rect x="3.2" y="12.5" width="78.2" height="40" rx="1.5" fill="url(#fPaper)"/><path d="M27.3,16.8 H49.2 L58.6,26.2 V45 H27.3Z" fill="#fafafa"/><path d="M49.2,16.8 L58.6,26.2 H50.4 Q49.2,26.2 49.2,25Z" fill="#e6e6e8"/><path d="M30,20.5 H47 M30,22.8 H47 M30,25.1 H47 M30,27.4 H56 M30,29.7 H56 M30,32 H56 M30,34.3 H56 M30,36.6 H56" stroke="#d4d6d8" stroke-width="0.9"/><path d="M0,42.4 Q0,40 2.4,40 H28.6 Q31.4,40 33.4,38.2 L35,36.8 Q36.9,35.1 39.6,35.1 H80.4 Q84.4,35.1 84.4,39.1 V62.4 Q84.4,66.4 80.4,66.4 H4 Q0,66.4 0,62.5 Z" fill="url(#fOpen)"/><path d="M0,42.4 Q0,40 2.4,40 H28.6 Q31.4,40 33.4,38.2 L35,36.8 Q36.9,35.1 39.6,35.1 H80.4 Q84.4,35.1 84.4,39.1 V62.4 Q84.4,66.4 80.4,66.4 H4 Q0,66.4 0,62.5 Z" fill="url(#fBot)"/></svg>
<svg style="left:398px;top:163px" width="84" height="66" viewBox="0 0 84.4 66.4" preserveAspectRatio="none"><path d="M0,4.3 Q0,0 4.3,0 H26.6 Q29.9,0 31.9,2.6 L34.7,6.9 Q36.4,9.2 39,9.2 H80.4 Q84.4,9.2 84.4,13.2 V62.4 Q84.4,66.4 80.4,66.4 H4 Q0,66.4 0,62.5 Z" fill="url(#fBack)"/><path d="M0,18 Q0,15.6 2.4,15.6 H26.4 Q29.4,15.6 31.6,13.8 L34,11.8 Q35.9,10.2 38.6,10.2 H80.4 Q84.4,10.2 84.4,14.2 V62.4 Q84.4,66.4 80.4,66.4 H4 Q0,66.4 0,62.5 Z" fill="url(#fFront)"/><path d="M0,18 Q0,15.6 2.4,15.6 H26.4 Q29.4,15.6 31.6,13.8 L34,11.8 Q35.9,10.2 38.6,10.2 H80.4 Q84.4,10.2 84.4,14.2 V62.4 Q84.4,66.4 80.4,66.4 H4 Q0,66.4 0,62.5 Z" fill="url(#fBot)"/><path fill-rule="evenodd" fill="url(#fGold)" d="M42,19.7 A19.1,19.1 0 1 1 41.99,19.7Z M42,24.7 A7,7 0 1 0 42.01,24.7Z M30,42.6 Q30,40.6 32,40.6 H52.6 Q54.6,40.6 54.6,42.6 Q54,52.8 42.3,52.8 Q30.6,52.8 30,42.6Z"/></svg>
<svg style="left:509px;top:163px" width="84" height="66" viewBox="0 0 84.4 66.4" preserveAspectRatio="none"><path d="M0,4.3 Q0,0 4.3,0 H26.6 Q29.9,0 31.9,2.6 L34.7,6.9 Q36.4,9.2 39,9.2 H80.4 Q84.4,9.2 84.4,13.2 V62.4 Q84.4,66.4 80.4,66.4 H4 Q0,66.4 0,62.5 Z" fill="url(#fBack)"/><rect x="3.2" y="12.5" width="78.2" height="40" rx="1.5" fill="url(#fPaper)"/><path d="M27.3,16.8 H49.2 L58.6,26.2 V45 H27.3Z" fill="#fafafa"/><path d="M49.2,16.8 L58.6,26.2 H50.4 Q49.2,26.2 49.2,25Z" fill="#e6e6e8"/><path d="M0,42.4 Q0,40 2.4,40 H28.6 Q31.4,40 33.4,38.2 L35,36.8 Q36.9,35.1 39.6,35.1 H80.4 Q84.4,35.1 84.4,39.1 V62.4 Q84.4,66.4 80.4,66.4 H4 Q0,66.4 0,62.5 Z" fill="url(#fOpen)"/><path d="M0,42.4 Q0,40 2.4,40 H28.6 Q31.4,40 33.4,38.2 L35,36.8 Q36.9,35.1 39.6,35.1 H80.4 Q84.4,35.1 84.4,39.1 V62.4 Q84.4,66.4 80.4,66.4 H4 Q0,66.4 0,62.5 Z" fill="url(#fBot)"/></svg>
<svg style="left:620px;top:163px" width="84" height="66" viewBox="0 0 84.4 66.4" preserveAspectRatio="none"><path d="M0,4.3 Q0,0 4.3,0 H26.6 Q29.9,0 31.9,2.6 L34.7,6.9 Q36.4,9.2 39,9.2 H80.4 Q84.4,9.2 84.4,13.2 V62.4 Q84.4,66.4 80.4,66.4 H4 Q0,66.4 0,62.5 Z" fill="url(#fBack)"/><path d="M0,18 Q0,15.6 2.4,15.6 H26.4 Q29.4,15.6 31.6,13.8 L34,11.8 Q35.9,10.2 38.6,10.2 H80.4 Q84.4,10.2 84.4,14.2 V62.4 Q84.4,66.4 80.4,66.4 H4 Q0,66.4 0,62.5 Z" fill="url(#fFront)"/><path d="M0,18 Q0,15.6 2.4,15.6 H26.4 Q29.4,15.6 31.6,13.8 L34,11.8 Q35.9,10.2 38.6,10.2 H80.4 Q84.4,10.2 84.4,14.2 V62.4 Q84.4,66.4 80.4,66.4 H4 Q0,66.4 0,62.5 Z" fill="url(#fBot)"/></svg>
<svg style="left:731px;top:163px" width="84" height="66" viewBox="0 0 84.4 66.4" preserveAspectRatio="none"><path d="M0,4.3 Q0,0 4.3,0 H26.6 Q29.9,0 31.9,2.6 L34.7,6.9 Q36.4,9.2 39,9.2 H80.4 Q84.4,9.2 84.4,13.2 V62.4 Q84.4,66.4 80.4,66.4 H4 Q0,66.4 0,62.5 Z" fill="#0a8260"/><path d="M0,18 Q0,15.6 2.4,15.6 H26.4 Q29.4,15.6 31.6,13.8 L34,11.8 Q35.9,10.2 38.6,10.2 H80.4 Q84.4,10.2 84.4,14.2 V62.4 Q84.4,66.4 80.4,66.4 H4 Q0,66.4 0,62.5 Z" fill="url(#dlFront)"/><path d="M0,18 Q0,15.6 2.4,15.6 H26.4 Q29.4,15.6 31.6,13.8 L34,11.8 Q35.9,10.2 38.6,10.2 H80.4 Q84.4,10.2 84.4,14.2 V62.4 Q84.4,66.4 80.4,66.4 H4 Q0,66.4 0,62.5 Z" fill="none"/><path d="M42.3,21.6 V52 M30.6,40.2 L42.3,52 L54,40.2" stroke="#f4fdff" stroke-width="3.8" fill="none" stroke-linecap="round" stroke-linejoin="round"/><path d="M30,57 H54.6" stroke="#f4fdff" stroke-width="3.6" stroke-linecap="round"/></svg>
<svg style="left:176px;top:280px" width="84" height="66" viewBox="0 0 84.4 66.4" preserveAspectRatio="none"><path d="M0,4.3 Q0,0 4.3,0 H26.6 Q29.9,0 31.9,2.6 L34.7,6.9 Q36.4,9.2 39,9.2 H80.4 Q84.4,9.2 84.4,13.2 V62.4 Q84.4,66.4 80.4,66.4 H4 Q0,66.4 0,62.5 Z" fill="url(#fBack)"/><path d="M0,18 Q0,15.6 2.4,15.6 H26.4 Q29.4,15.6 31.6,13.8 L34,11.8 Q35.9,10.2 38.6,10.2 H80.4 Q84.4,10.2 84.4,14.2 V62.4 Q84.4,66.4 80.4,66.4 H4 Q0,66.4 0,62.5 Z" fill="url(#fFront)"/><path d="M0,18 Q0,15.6 2.4,15.6 H26.4 Q29.4,15.6 31.6,13.8 L34,11.8 Q35.9,10.2 38.6,10.2 H80.4 Q84.4,10.2 84.4,14.2 V62.4 Q84.4,66.4 80.4,66.4 H4 Q0,66.4 0,62.5 Z" fill="url(#fBot)"/><path d="M42.00,21.20 L47.05,33.24 L60.07,34.33 L50.18,42.86 L53.17,55.57 L42.00,48.80 L30.83,55.57 L33.82,42.86 L23.93,34.33 L36.95,33.24Z" fill="url(#fGold)" stroke="url(#fGold)" stroke-width="1.6" stroke-linejoin="round"/></svg>
<svg style="left:287px;top:280px" width="84" height="66" viewBox="0 0 84.4 66.4" preserveAspectRatio="none"><path d="M0,4.3 Q0,0 4.3,0 H26.6 Q29.9,0 31.9,2.6 L34.7,6.9 Q36.4,9.2 39,9.2 H80.4 Q84.4,9.2 84.4,13.2 V62.4 Q84.4,66.4 80.4,66.4 H4 Q0,66.4 0,62.5 Z" fill="url(#fBack)"/><path d="M1.8,13 Q1.8,11 3.8,11 H36.6 L34,13.4 Q31.6,15.8 29,15.8 H1.8Z" fill="#f2f2f4"/><path d="M1.8,14 H33 L30.5,15.8 H1.8Z" fill="#d8dbe2"/><path d="M0,18 Q0,15.6 2.4,15.6 H26.4 Q29.4,15.6 31.6,13.8 L34,11.8 Q35.9,10.2 38.6,10.2 H80.4 Q84.4,10.2 84.4,14.2 V62.4 Q84.4,66.4 80.4,66.4 H4 Q0,66.4 0,62.5 Z" fill="url(#fFront)"/><path d="M0,18 Q0,15.6 2.4,15.6 H26.4 Q29.4,15.6 31.6,13.8 L34,11.8 Q35.9,10.2 38.6,10.2 H80.4 Q84.4,10.2 84.4,14.2 V62.4 Q84.4,66.4 80.4,66.4 H4 Q0,66.4 0,62.5 Z" fill="url(#fBot)"/></svg>
<svg style="left:398px;top:280px" width="84" height="66" viewBox="0 0 84.4 66.4" preserveAspectRatio="none"><path d="M0,4.3 Q0,0 4.3,0 H26.6 Q29.9,0 31.9,2.6 L34.7,6.9 Q36.4,9.2 39,9.2 H80.4 Q84.4,9.2 84.4,13.2 V62.4 Q84.4,66.4 80.4,66.4 H4 Q0,66.4 0,62.5 Z" fill="url(#fBack)"/><path d="M0,18 Q0,15.6 2.4,15.6 H26.4 Q29.4,15.6 31.6,13.8 L34,11.8 Q35.9,10.2 38.6,10.2 H80.4 Q84.4,10.2 84.4,14.2 V62.4 Q84.4,66.4 80.4,66.4 H4 Q0,66.4 0,62.5 Z" fill="url(#fFront)"/><path d="M0,18 Q0,15.6 2.4,15.6 H26.4 Q29.4,15.6 31.6,13.8 L34,11.8 Q35.9,10.2 38.6,10.2 H80.4 Q84.4,10.2 84.4,14.2 V62.4 Q84.4,66.4 80.4,66.4 H4 Q0,66.4 0,62.5 Z" fill="url(#fBot)"/><path d="M37.2,28.4 H32.4 A10.6,10.6 0 0 0 32.4,49.6 H37.2 M47.6,28.4 H52 A10.6,10.6 0 0 1 52,49.6 H47.6 M33.3,39 H51.4" stroke="url(#fGold)" stroke-width="4.1" fill="none" stroke-linecap="round"/></svg>
<svg style="left:509px;top:280px" width="84" height="66" viewBox="0 0 84.4 66.4" preserveAspectRatio="none"><path d="M0,4.3 Q0,0 4.3,0 H26.6 Q29.9,0 31.9,2.6 L34.7,6.9 Q36.4,9.2 39,9.2 H80.4 Q84.4,9.2 84.4,13.2 V62.4 Q84.4,66.4 80.4,66.4 H4 Q0,66.4 0,62.5 Z" fill="url(#muBack)"/><path d="M0,18 Q0,15.6 2.4,15.6 H26.4 Q29.4,15.6 31.6,13.8 L34,11.8 Q35.9,10.2 38.6,10.2 H80.4 Q84.4,10.2 84.4,14.2 V62.4 Q84.4,66.4 80.4,66.4 H4 Q0,66.4 0,62.5 Z" fill="url(#muFront)"/><path d="M0,18 Q0,15.6 2.4,15.6 H26.4 Q29.4,15.6 31.6,13.8 L34,11.8 Q35.9,10.2 38.6,10.2 H80.4 Q84.4,10.2 84.4,14.2 V62.4 Q84.4,66.4 80.4,66.4 H4 Q0,66.4 0,62.5 Z" fill="none"/><circle cx="37" cy="51.7" r="8" fill="#fafafa"/><path d="M42,51.7 V19.4 Q42,17.2 44.2,17.8 L55.4,21.2 Q58,22 58,24.6 V30.8 Q58,32.9 56,32.3 L45.6,29 V51.7Z" fill="#fafafa"/></svg>
<svg style="left:620px;top:280px" width="84" height="66" viewBox="0 0 84.4 66.4" preserveAspectRatio="none"><path d="M0,4.3 Q0,0 4.3,0 H26.6 Q29.9,0 31.9,2.6 L34.7,6.9 Q36.4,9.2 39,9.2 H80.4 Q84.4,9.2 84.4,13.2 V62.4 Q84.4,66.4 80.4,66.4 H4 Q0,66.4 0,62.5 Z" fill="url(#fBack)"/><path d="M0,18 Q0,15.6 2.4,15.6 H26.4 Q29.4,15.6 31.6,13.8 L34,11.8 Q35.9,10.2 38.6,10.2 H80.4 Q84.4,10.2 84.4,14.2 V62.4 Q84.4,66.4 80.4,66.4 H4 Q0,66.4 0,62.5 Z" fill="url(#fFront)"/><path d="M0,18 Q0,15.6 2.4,15.6 H26.4 Q29.4,15.6 31.6,13.8 L34,11.8 Q35.9,10.2 38.6,10.2 H80.4 Q84.4,10.2 84.4,14.2 V62.4 Q84.4,66.4 80.4,66.4 H4 Q0,66.4 0,62.5 Z" fill="url(#fBot)"/></svg>
<svg style="left:731px;top:280px" width="84" height="66" viewBox="0 0 84.4 66.4" preserveAspectRatio="none"><path d="M0,4.3 Q0,0 4.3,0 H26.6 Q29.9,0 31.9,2.6 L34.7,6.9 Q36.4,9.2 39,9.2 H80.4 Q84.4,9.2 84.4,13.2 V62.4 Q84.4,66.4 80.4,66.4 H4 Q0,66.4 0,62.5 Z" fill="url(#fBack)"/><path d="M0,18 Q0,15.6 2.4,15.6 H26.4 Q29.4,15.6 31.6,13.8 L34,11.8 Q35.9,10.2 38.6,10.2 H80.4 Q84.4,10.2 84.4,14.2 V62.4 Q84.4,66.4 80.4,66.4 H4 Q0,66.4 0,62.5 Z" fill="url(#fFront)"/><path d="M0,18 Q0,15.6 2.4,15.6 H26.4 Q29.4,15.6 31.6,13.8 L34,11.8 Q35.9,10.2 38.6,10.2 H80.4 Q84.4,10.2 84.4,14.2 V62.4 Q84.4,66.4 80.4,66.4 H4 Q0,66.4 0,62.5 Z" fill="url(#fBot)"/></svg>
<svg style="left:176px;top:397px" width="84" height="66" viewBox="0 0 84.4 66.4" preserveAspectRatio="none"><path d="M0,4.3 Q0,0 4.3,0 H26.6 Q29.9,0 31.9,2.6 L34.7,6.9 Q36.4,9.2 39,9.2 H80.4 Q84.4,9.2 84.4,13.2 V62.4 Q84.4,66.4 80.4,66.4 H4 Q0,66.4 0,62.5 Z" fill="url(#fBack)"/><path d="M0,18 Q0,15.6 2.4,15.6 H26.4 Q29.4,15.6 31.6,13.8 L34,11.8 Q35.9,10.2 38.6,10.2 H80.4 Q84.4,10.2 84.4,14.2 V62.4 Q84.4,66.4 80.4,66.4 H4 Q0,66.4 0,62.5 Z" fill="url(#fFront)"/><path d="M0,18 Q0,15.6 2.4,15.6 H26.4 Q29.4,15.6 31.6,13.8 L34,11.8 Q35.9,10.2 38.6,10.2 H80.4 Q84.4,10.2 84.4,14.2 V62.4 Q84.4,66.4 80.4,66.4 H4 Q0,66.4 0,62.5 Z" fill="url(#fBot)"/><rect x="20.5" y="24.5" width="43.4" height="26.9" rx="13.45" fill="url(#fGold)"/><path d="M32.3,33.6 V42.2 M28,37.9 H36.6" stroke="#ffdf80" stroke-width="1.7"/><circle cx="52" cy="34.2" r="3.2" fill="#ffdf80"/><circle cx="48.5" cy="41.4" r="3.2" fill="#ffdf80"/></svg>
<svg style="left:287px;top:397px" width="84" height="66" viewBox="0 0 84.4 66.4" preserveAspectRatio="none"><path d="M0,4.3 Q0,0 4.3,0 H26.6 Q29.9,0 31.9,2.6 L34.7,6.9 Q36.4,9.2 39,9.2 H80.4 Q84.4,9.2 84.4,13.2 V62.4 Q84.4,66.4 80.4,66.4 H4 Q0,66.4 0,62.5 Z" fill="url(#fBack)"/><path d="M0,18 Q0,15.6 2.4,15.6 H26.4 Q29.4,15.6 31.6,13.8 L34,11.8 Q35.9,10.2 38.6,10.2 H80.4 Q84.4,10.2 84.4,14.2 V62.4 Q84.4,66.4 80.4,66.4 H4 Q0,66.4 0,62.5 Z" fill="url(#fFront)"/><path d="M0,18 Q0,15.6 2.4,15.6 H26.4 Q29.4,15.6 31.6,13.8 L34,11.8 Q35.9,10.2 38.6,10.2 H80.4 Q84.4,10.2 84.4,14.2 V62.4 Q84.4,66.4 80.4,66.4 H4 Q0,66.4 0,62.5 Z" fill="url(#fBot)"/><circle cx="39.5" cy="34.7" r="13.8" stroke="url(#fGold)" stroke-width="3.8" fill="none"/><path d="M49.6,44.8 L62.2,57.4" stroke="url(#fGold)" stroke-width="3.8" stroke-linecap="round"/></svg>
<svg style="left:398px;top:397px" width="84" height="66" viewBox="0 0 84.4 66.4" preserveAspectRatio="none"><path d="M0,4.3 Q0,0 4.3,0 H26.6 Q29.9,0 31.9,2.6 L34.7,6.9 Q36.4,9.2 39,9.2 H80.4 Q84.4,9.2 84.4,13.2 V62.4 Q84.4,66.4 80.4,66.4 H4 Q0,66.4 0,62.5 Z" fill="#8560c0"/><path d="M0,18 Q0,15.6 2.4,15.6 H26.4 Q29.4,15.6 31.6,13.8 L34,11.8 Q35.9,10.2 38.6,10.2 H80.4 Q84.4,10.2 84.4,14.2 V62.4 Q84.4,66.4 80.4,66.4 H4 Q0,66.4 0,62.5 Z" fill="url(#viFront)"/><path d="M0,18 Q0,15.6 2.4,15.6 H26.4 Q29.4,15.6 31.6,13.8 L34,11.8 Q35.9,10.2 38.6,10.2 H80.4 Q84.4,10.2 84.4,14.2 V62.4 Q84.4,66.4 80.4,66.4 H4 Q0,66.4 0,62.5 Z" fill="none"/><rect x="4.3" y="19.9" width="8.6" height="8.4" rx="1.6" fill="#5b3d94"/><rect x="4.3" y="36" width="8.6" height="8.4" rx="1.6" fill="#4a2f7c"/><rect x="4.3" y="52.1" width="8.6" height="8.4" rx="1.6" fill="#3b2562"/><rect x="71.4" y="19.9" width="8.6" height="8.4" rx="1.6" fill="#5b3d94"/><rect x="71.4" y="36" width="8.6" height="8.4" rx="1.6" fill="#4a2f7c"/><rect x="71.4" y="52.1" width="8.6" height="8.4" rx="1.6" fill="#3b2562"/><path d="M31.9,25.6 Q31.9,21.8 35.2,23.7 L55.4,37.6 Q58.2,39.5 55.4,41.4 L35.2,54.8 Q31.9,56.7 31.9,52.9Z" fill="#f6efff"/></svg>
<svg style="left:520px;top:390px" width="64" height="85" viewBox="0 0 64 85"><g transform="translate(0.1,0.4)"><path d="M0.5,0.5 H43.2 L61.8,19 V82.6 H0.5Z" fill="#fbfbfb" stroke="#8c8782" stroke-width="1"/><path d="M43.2,0.5 V19 H61.8" fill="#fbfbfb" stroke="#8c8782" stroke-width="1" stroke-linejoin="miter"/></g></svg>
<svg style="left:630px;top:389px" width="64" height="86" viewBox="0 0 64 86"><g transform="translate(0.9,0.8)"><path d="M0,0 H44.7 L62.5,18.2 V84.5 H0Z" fill="url(#docG)"/><path d="M6,7.40 H44 M6,10.41 H44 M6,13.42 H44 M6,16.43 H44 M6,19.44 H56.6 M6,22.45 H56.6 M6,25.46 H56.6 M6,28.47 H56.6 M6,31.48 H56.6 M6,34.49 H56.6 M6,37.50 H56.6 M6,40.51 H56.6 M6,43.52 H56.6 M6,46.53 H56.6 M6,49.54 H56.6 M6,52.55 H56.6 M6,55.56 H56.6 M6,58.57 H56.6 M6,61.58 H56.6 M6,64.59 H56.6 M6,67.60 H56.6 M6,70.61 H56.6 M6,73.62 H56.6 M6,76.63 H56.6 " stroke="#d3d6d9" stroke-width="0.9"/><path d="M44.7,0 L62.5,18.2 H46 Q44.7,18.2 44.7,17Z" fill="url(#foldG)"/></g></svg>
<svg style="left:741px;top:389px" width="64" height="86" viewBox="0 0 64 86"><g transform="translate(0.9,0.8)"><path d="M0,0 H44.7 L62.5,18.2 V84.5 H0Z" fill="url(#docG)"/><path d="M6,7.40 H44 M6,10.41 H44 M6,13.42 H44 M6,16.43 H44 M6,19.44 H56.6 M6,22.45 H56.6 M6,25.46 H56.6 M6,28.47 H56.6 M6,31.48 H56.6 M6,34.49 H56.6 M6,37.50 H56.6 M6,40.51 H56.6 M6,43.52 H56.6 M6,46.53 H56.6 M6,49.54 H56.6 M6,52.55 H56.6 M6,55.56 H56.6 M6,58.57 H56.6 M6,61.58 H56.6 M6,64.59 H56.6 M6,67.60 H56.6 M6,70.61 H56.6 M6,73.62 H56.6 M6,76.63 H56.6 " stroke="#d3d6d9" stroke-width="0.9"/><path d="M44.7,0 L62.5,18.2 H46 Q44.7,18.2 44.7,17Z" fill="url(#foldG)"/></g></svg>
<svg style="left:297px;top:522px" width="64" height="86" viewBox="0 0 64 86"><g transform="translate(0.8,0)"><path d="M0,0 H44.7 L62.5,18.2 V84.5 H0Z" fill="url(#docG)"/><path d="M6,7.40 H44 M6,10.41 H44 M6,13.42 H44 M6,16.43 H44 M6,19.44 H56.6 M6,22.45 H56.6 M6,25.46 H56.6 M6,28.47 H56.6 M6,31.48 H56.6 M6,34.49 H56.6 M6,37.50 H56.6 M6,40.51 H56.6 M6,43.52 H56.6 M6,46.53 H56.6 M6,49.54 H56.6 M6,52.55 H56.6 M6,55.56 H56.6 M6,58.57 H56.6 M6,61.58 H56.6 M6,64.59 H56.6 M6,67.60 H56.6 M6,70.61 H56.6 M6,73.62 H56.6 M6,76.63 H56.6 " stroke="#d3d6d9" stroke-width="0.9"/><path d="M44.7,0 L62.5,18.2 H46 Q44.7,18.2 44.7,17Z" fill="url(#foldG)"/></g></svg>
<svg style="left:170px;top:527px" width="97" height="73" viewBox="0 0 97 73"><g transform="translate(0,0.9)"><rect x="0.5" y="0.5" width="95" height="71.2" rx="3" fill="#fbfbfb" stroke="#8a8782" stroke-width="1"/><path d="M0.5,3.7 V3.5 Q0.5,0.5 3.5,0.5 H92.5 Q95.5,0.5 95.5,3.5 V3.7Z" fill="#7c7975" stroke="#7c7975" stroke-width="1"/><rect x="84.6" y="1.6" width="1.4" height="1.4" fill="#e8e8e8"/><rect x="87.6" y="1.6" width="1.4" height="1.4" fill="#e8e8e8"/><rect x="90.6" y="1.6" width="1.4" height="1.4" fill="#e8e8e8"/><path transform="translate(40.6,29.1)" fill-rule="evenodd" d="M-3.82,-8.59 L-3.17,-13.74 L3.17,-13.74 L3.82,-8.59 L5.53,-7.60 L10.31,-9.62 L13.48,-4.12 L9.35,-0.98 L9.35,0.98 L13.48,4.12 L10.31,9.62 L5.53,7.60 L3.82,8.59 L3.17,13.74 L-3.17,13.74 L-3.82,8.59 L-5.53,7.60 L-10.31,9.62 L-13.48,4.12 L-9.35,0.98 L-9.35,-0.98 L-13.48,-4.12 L-10.31,-9.62 L-5.53,-7.60Z M5.8,0 A5.8,5.8 0 1 0 -5.8,0 A5.8,5.8 0 1 0 5.8,0Z" fill="url(#gearA)" stroke="url(#gearA)" stroke-width="3.6" stroke-linejoin="round"/><path transform="translate(59,51.3)" fill-rule="evenodd" d="M-2.85,-6.39 L-2.34,-10.13 L2.34,-10.13 L2.85,-6.39 L4.11,-5.66 L7.61,-7.09 L9.95,-3.04 L6.96,-0.73 L6.96,0.73 L9.95,3.04 L7.61,7.09 L4.11,5.66 L2.85,6.39 L2.34,10.13 L-2.34,10.13 L-2.85,6.39 L-4.11,5.66 L-7.61,7.09 L-9.95,3.04 L-6.96,0.73 L-6.96,-0.73 L-9.95,-3.04 L-7.61,-7.09 L-4.11,-5.66Z M5.5,0 A5.5,5.5 0 1 0 -5.5,0 A5.5,5.5 0 1 0 5.5,0Z" fill="url(#gearB)" stroke="url(#gearB)" stroke-width="2.8" stroke-linejoin="round"/></g></svg>
<svg style="left:0;top:0" width="1110" height="742" viewBox="0 0 1110 742"><g stroke="#e81c1c" stroke-width="4" fill="none" stroke-linecap="round" stroke-linejoin="round"><path d="M646.5,53 Q640,53.4 634,56 Q626,59.4 619,64.3 Q625.5,70.6 634,73.6 Q639,75.4 644,76"/><path d="M627,62.6 L785.5,61.6"/><path stroke-width="3.7" d="M403.2,564.9 Q394,564 389,567.4 Q384,570 379.5,570.6 Q376.6,572.4 378.4,575 Q381.5,580 389.7,586.2 L399.9,592.3"/><path stroke-width="3.7" d="M384.3,574.7 Q390,574.6 399.2,578.8 Q412,580.6 427.6,581.5 Q440,584.4 454.6,588.2 L474.9,591 Q480,592.6 484.3,593.6 L493.1,593.9"/></g></svg>

</div></body></html>
